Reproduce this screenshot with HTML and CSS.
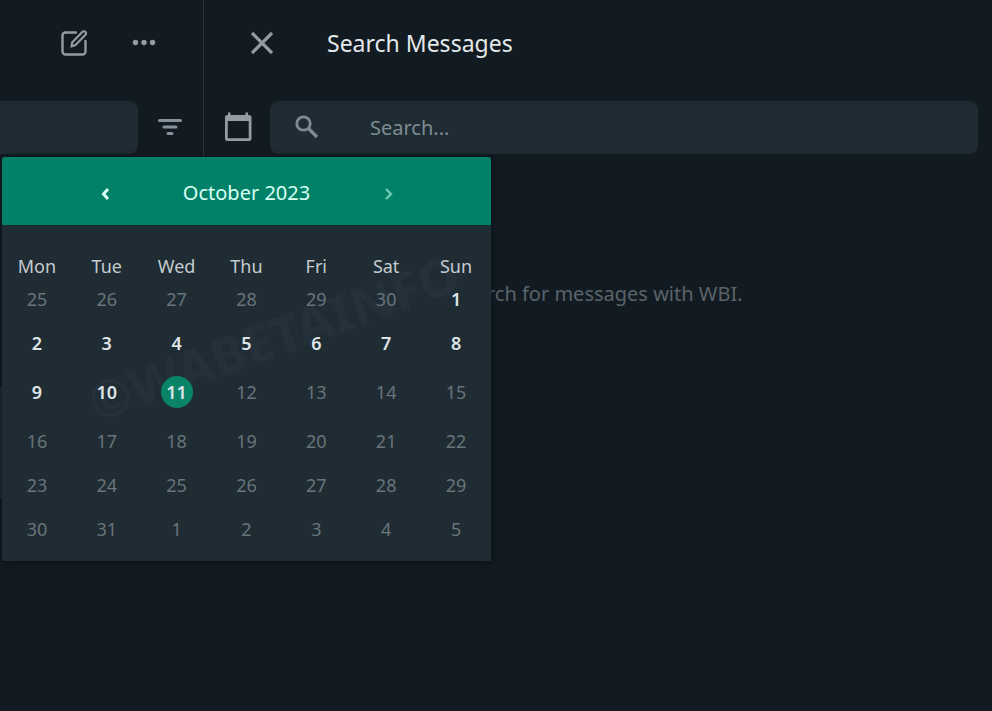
FILE: index.html
```html
<!DOCTYPE html>
<html lang="en">
<head>
    <meta charset="UTF-8">
    <meta name="viewport" content="width=device-width, initial-scale=1.0">
    <title>Search Messages</title>
    <link rel="stylesheet" href="styles.css">
</head>
<body>
    <div class="app">
        <aside class="sidebar">
            <div class="sidebar-header">
                <button class="icon-button" aria-label="New chat">
                    <svg width="30" height="30" viewBox="0 0 30 30" fill="none" stroke="currentColor" stroke-linejoin="round" stroke-linecap="round">
                        <path stroke-width="2.4" d="M17 4.5H6.500A3 3 0 0 0 3.500 7.500V23.500a3 3 0 0 0 3 3h17a3 3 0 0 0 3-3V13"/>
                        <path stroke-width="2.2" d="M12.500 18.500l.8-4.300L23.600 3.800a1.900 1.900 0 0 1 2.700 0l.2.2a1.900 1.900 0 0 1 0 2.700L16.500 17z"/>
                    </svg>
                </button>
                <button class="icon-button" aria-label="Menu">
                    <svg width="30" height="30" viewBox="0 0 30 30" fill="currentColor">
                        <circle cx="6.500" cy="14.500" r="2.700"/>
                        <circle cx="15" cy="14.500" r="2.700"/>
                        <circle cx="23.500" cy="14.500" r="2.700"/>
                    </svg>
                </button>
            </div>
            <div class="sidebar-search">
                <input type="text" class="chat-search" aria-label="Search chats">
                <button class="icon-button filter-button" aria-label="Filter chats">
                    <svg width="30" height="30" viewBox="0 0 30 30" fill="none" stroke="currentColor" stroke-width="3" stroke-linecap="round">
                        <path d="M4.500 8.500h21M9 15h12M13 21.500h4"/>
                    </svg>
                </button>
            </div>
            <div class="active-chat"></div>
        </aside>

        <main class="search-panel">
            <header class="panel-header">
                <button class="icon-button" aria-label="Close">
                    <svg width="30" height="30" viewBox="0 0 30 30" fill="none" stroke="currentColor" stroke-width="3.200">
                        <path d="M5 5l20 20M25 5L5 25"/>
                    </svg>
                </button>
                <h1>Search Messages</h1>
            </header>
            <div class="search-row">
                <button class="icon-button" aria-label="Pick a date">
                    <svg width="30" height="30" viewBox="0 0 30 30" fill="currentColor">
                        <path fill-rule="evenodd" d="M5 0.500h2.500v2.500h15V0.500H25v2.500h1a2.500 2.500 0 0 1 2.500 2.500V26.500a2.500 2.500 0 0 1-2.500 2.500H4.500A2.500 2.500 0 0 1 2 26.500V5.500A2.500 2.500 0 0 1 4.500 3H5zM4.800 9v17.300h20.900V9z"/>
                    </svg>
                </button>
                <label class="search-box">
                    <svg width="30" height="30" viewBox="0 0 30 30" fill="none" stroke="currentColor">
                        <circle cx="11.500" cy="11.500" r="6.700" stroke-width="2.800"/>
                        <path stroke-width="3.200" d="M16.500 16.500l8.500 8.500"/>
                    </svg>
                    <input type="text" placeholder="Search..." aria-label="Search messages">
                </label>
            </div>
            <p class="hint">Search for messages with WBI.</p>
        </main>

        <!-- Date picker -->
        <section class="calendar">
            <div class="calendar-header">
                <button class="arrow" aria-label="Previous month">
                    <svg width="12" height="14" viewBox="0 0 12 14" fill="none" stroke="currentColor" stroke-width="3"><path d="M9 2L4.500 7L9 12"/></svg>
                </button>
                <h2>October 2023</h2>
                <button class="arrow next" aria-label="Next month">
                    <svg width="12" height="14" viewBox="0 0 12 14" fill="none" stroke="currentColor" stroke-width="2.400"><path d="M3 2l5 5l-5 5"/></svg>
                </button>
            </div>
            <div class="watermark">©WABETAINFO</div>
            <table class="days">
                <thead>
                    <tr><th>Mon</th><th>Tue</th><th>Wed</th><th>Thu</th><th>Fri</th><th>Sat</th><th>Sun</th></tr>
                </thead>
                <tbody>
                    <tr><td>25</td><td>26</td><td>27</td><td>28</td><td>29</td><td>30</td><td class="past">1</td></tr>
                    <tr class="past"><td>2</td><td>3</td><td>4</td><td>5</td><td>6</td><td>7</td><td>8</td></tr>
                    <tr class="current"><td class="past">9</td><td class="past">10</td><td class="past"><span class="today">11</span></td><td>12</td><td>13</td><td>14</td><td>15</td></tr>
                    <tr><td>16</td><td>17</td><td>18</td><td>19</td><td>20</td><td>21</td><td>22</td></tr>
                    <tr><td>23</td><td>24</td><td>25</td><td>26</td><td>27</td><td>28</td><td>29</td></tr>
                    <tr><td>30</td><td>31</td><td>1</td><td>2</td><td>3</td><td>4</td><td>5</td></tr>
                </tbody>
            </table>
        </section>
    </div>
</body>
</html>
```
FILE: styles.css
```css
* {
    box-sizing: border-box;
}

body {
    margin: 0;
    font-family: "Noto Sans", "Open Sans", sans-serif;
    background-color: #131b22;
    color: #e3e8ea;
}

.app {
    position: relative;
    display: flex;
    min-height: 100vh;
}

h1, h2, p {
    margin: 0;
    font-weight: 400;
}

button {
    padding: 0;
    border: none;
    background: none;
    cursor: pointer;
}

input {
    border: none;
    outline: none;
    background: none;
    color: #e3e8ea;
    font: inherit;
}

svg {
    display: block;
}

.icon-button {
    flex: none;
    color: #939ca2;
}

/* Chat list */
.sidebar {
    flex: 0 0 204px;
    min-width: 0;
}

.sidebar-header {
    display: flex;
    align-items: center;
    justify-content: flex-end;
    gap: 40px;
    height: 86px;
    padding-right: 44px;
    border-right: 1px solid #27323a;
}

.sidebar-search {
    display: flex;
    align-items: center;
    gap: 17px;
    height: 82px;
    padding-right: 18px;
    border-right: 1px solid #27323a;
}

.chat-search {
    flex: 1;
    min-width: 0;
    height: 53px;
    border-radius: 0 9px 9px 0;
    background-color: #202c33;
}

.filter-button {
    color: #87929a;
}

.active-chat {
    height: 112px;
    margin-top: 218px;
    background-color: #202c33;
}

/* Message search */
.search-panel {
    flex: 1;
    min-width: 0;
}

.panel-header {
    display: flex;
    align-items: center;
    gap: 50px;
    height: 86px;
    padding-left: 43px;
}

.panel-header h1 {
    font-size: 23px;
    line-height: 32px;
}

.search-row {
    display: flex;
    align-items: center;
    gap: 17px;
    height: 82px;
    padding: 0 14px 0 19px;
}

.search-box {
    flex: 1;
    display: flex;
    align-items: center;
    gap: 48px;
    height: 53px;
    padding: 0 22px;
    border-radius: 9px;
    background-color: #202c33;
    color: #7f8b92;
}

.search-box input {
    flex: 1;
    min-width: 0;
    padding: 0;
    font-size: 20px;
}

.search-box input::placeholder {
    color: #7f8b92;
    opacity: 1;
}

.hint {
    margin-top: 110px;
    color: #59636a;
    font-size: 20px;
    line-height: 32px;
    text-align: center;
}

/* Date picker */
.calendar {
    position: absolute;
    top: 157px;
    left: 2px;
    width: 489px;
    padding-bottom: 10px;
    overflow: hidden;
    border-radius: 3px 3px 0 0;
    background-color: #202c33;
    box-shadow: 0 2px 10px rgba(0, 12, 18, 0.6);
}

.calendar-header {
    display: flex;
    align-items: center;
    justify-content: center;
    height: 68px;
    padding-top: 4px;
    background-color: #028169;
}

.calendar-header h2 {
    width: 244px;
    color: #d9fff3;
    font-size: 20px;
    line-height: 28px;
    text-align: center;
}

.arrow {
    display: flex;
    justify-content: center;
    width: 40px;
    padding: 10px 0 8px;
    color: #d9fff3;
}

.arrow.next {
    color: #6fc9b3;
}

.days {
    position: relative;
    width: 100%;
    margin-top: 30px;
    border-collapse: collapse;
    table-layout: fixed;
    font-size: 18px;
    line-height: 22px;
    text-align: center;
}

.days th {
    height: 22px;
    padding: 0;
    color: #c3cbcf;
    font-weight: 400;
}

.days td {
    height: 44px;
    padding: 0;
    color: #68747b;
}

.days .current td {
    height: 54px;
}

.days .past,
.days .past td {
    color: #dde4e7;
    font-weight: 600;
}

.today {
    display: block;
    width: 32px;
    margin: 0 auto;
    border-radius: 50%;
    background-color: #0a8467;
    line-height: 32px;
}

.watermark {
    position: absolute;
    top: 150px;
    left: 76px;
    color: #24313a;
    font-size: 52px;
    font-weight: 800;
    line-height: 60px;
    transform: rotate(-20deg);
}
```
